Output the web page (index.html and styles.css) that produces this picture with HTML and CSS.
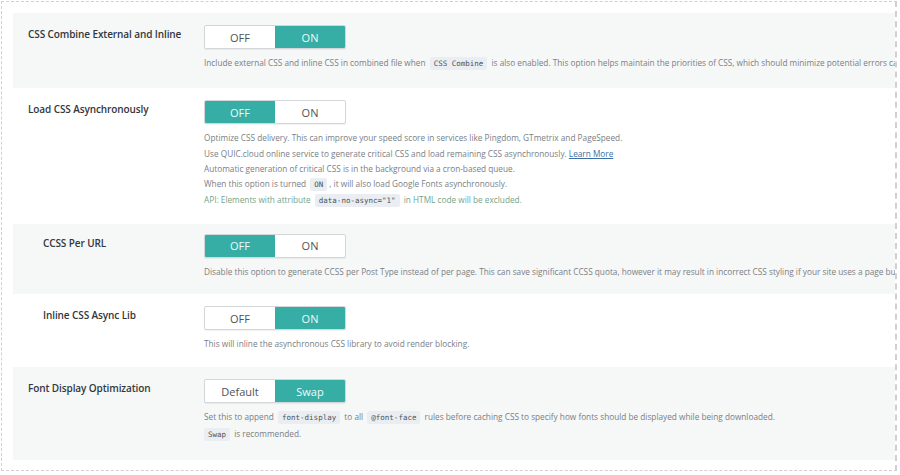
FILE: index.html
```html
<!DOCTYPE html>
<html lang="en">
<head>
  <meta charset="UTF-8">
  <title>CSS Settings</title>
  <link rel="stylesheet" href="styles.css">
</head>
<body>
  <div class="frame">
    <div class="settings">

      <div class="row shade">
        <div class="label">CSS Combine External and Inline</div>
        <div class="field">
          <div class="switch"><span>OFF</span><span class="active">ON</span></div>
          <div class="desc">
            <p>Include external CSS and inline CSS in combined file when <code>CSS Combine</code> is also enabled. This option helps maintain the priorities of CSS, which should minimize potential errors caused by CSS Combine.</p>
          </div>
        </div>
      </div>

      <div class="row long">
        <div class="label">Load CSS Asynchronously</div>
        <div class="field">
          <div class="switch"><span class="active">OFF</span><span>ON</span></div>
          <div class="desc">
            <p>Optimize CSS delivery. This can improve your speed score in services like Pingdom, GTmetrix and PageSpeed.</p>
            <p>Use QUIC.cloud online service to generate critical CSS and load remaining CSS asynchronously. <a href="#">Learn More</a></p>
            <p>Automatic generation of critical CSS is in the background via a cron-based queue.</p>
            <p>When this option is turned <code>ON</code>, it will also load Google Fonts asynchronously.</p>
            <p class="api">API: Elements with attribute <code>data-no-async="1"</code> in HTML code will be excluded.</p>
          </div>
        </div>
      </div>

      <div class="row shade sub tight">
        <div class="label">CCSS Per URL</div>
        <div class="field">
          <div class="switch"><span class="active">OFF</span><span>ON</span></div>
          <div class="desc">
            <p>Disable this option to generate CCSS per Post Type instead of per page. This can save significant CCSS quota, however it may result in incorrect CSS styling if your site uses a page builder.</p>
          </div>
        </div>
      </div>

      <div class="row sub">
        <div class="label">Inline CSS Async Lib</div>
        <div class="field">
          <div class="switch"><span>OFF</span><span class="active">ON</span></div>
          <div class="desc">
            <p>This will inline the asynchronous CSS library to avoid render blocking.</p>
          </div>
        </div>
      </div>

      <div class="row shade last">
        <div class="label">Font Display Optimization</div>
        <div class="field">
          <div class="switch"><span>Default</span><span class="active">Swap</span></div>
          <div class="desc">
            <p>Set this to append <code>font-display</code> to all <code>@font-face</code> rules before caching CSS to specify how fonts should be displayed while being downloaded.</p>
            <p><code class="first">Swap</code> is recommended.</p>
          </div>
        </div>
      </div>

    </div>
  </div>
</body>
</html>
```

FILE: styles.css
```css
*{
  box-sizing: border-box;
  margin: 0;
  padding: 0;
}
body{
  background: #fff;
  font-family: "Open Sans", "Noto Sans", sans-serif;
  color: #23282d;
}
.frame{
  margin: 1px;
  width: 896px;
  height: 470px;
  border: 1px dashed #d0d0d0;
  border-right-width: 2px;
  padding: 11px 0 11px 11px;
  overflow: hidden;
}
.settings{
  width: 882px;
  overflow: hidden;
}
.row{
  display: flex;
  padding: 12px 0 16px 15px;
}
.row.shade{
  background: #f6f7f7;
}
.row:first-child{
  padding-bottom: 17px;
}
.row.long{
  padding-bottom: 15px;
}
.row.tight{
  padding-top: 10px;
  padding-bottom: 15px;
}
.row.sub{
  padding-left: 30px;
}
.row.last{
  padding-bottom: 18px;
}
.label{
  width: 176px;
  flex-shrink: 0;
  font-size: 10px;
  font-weight: 600;
  letter-spacing: -0.1px;
  line-height: 18px;
  color: #32373c;
}
.row.sub .label{
  width: 161px;
}
.field{
  flex: 1;
  min-width: 0;
}
.switch{
  display: flex;
  width: 142px;
  height: 24px;
  border: 1px solid #d3d7d9;
  border-radius: 2px;
  background: #fff;
  box-shadow: 0 1px 1px rgba(0,0,0,0.06);
  overflow: hidden;
}
.switch span{
  flex: 1;
  display: flex;
  align-items: center;
  justify-content: center;
  font-size: 11px;
  color: #4d5358;
}
.switch span.active{
  background: #36ada5;
  color: #effaf9;
}
.desc{
  margin-top: 6px;
  font-size: 8.25px;
  line-height: 15.3px;
  color: #7a8085;
  white-space: nowrap;
}
.desc a{
  color: #3b6fa3;
}
.desc .api{
  color: #74a488;
}
code{
  font-family: "DejaVu Sans Mono", monospace;
  font-size: 7.5px;
  background: #eaeef2;
  color: #4a5157;
  padding: 2px 4px;
  margin: 0 2px;
  border-radius: 2px;
}
code.first{
  margin-left: 0;
}
```
